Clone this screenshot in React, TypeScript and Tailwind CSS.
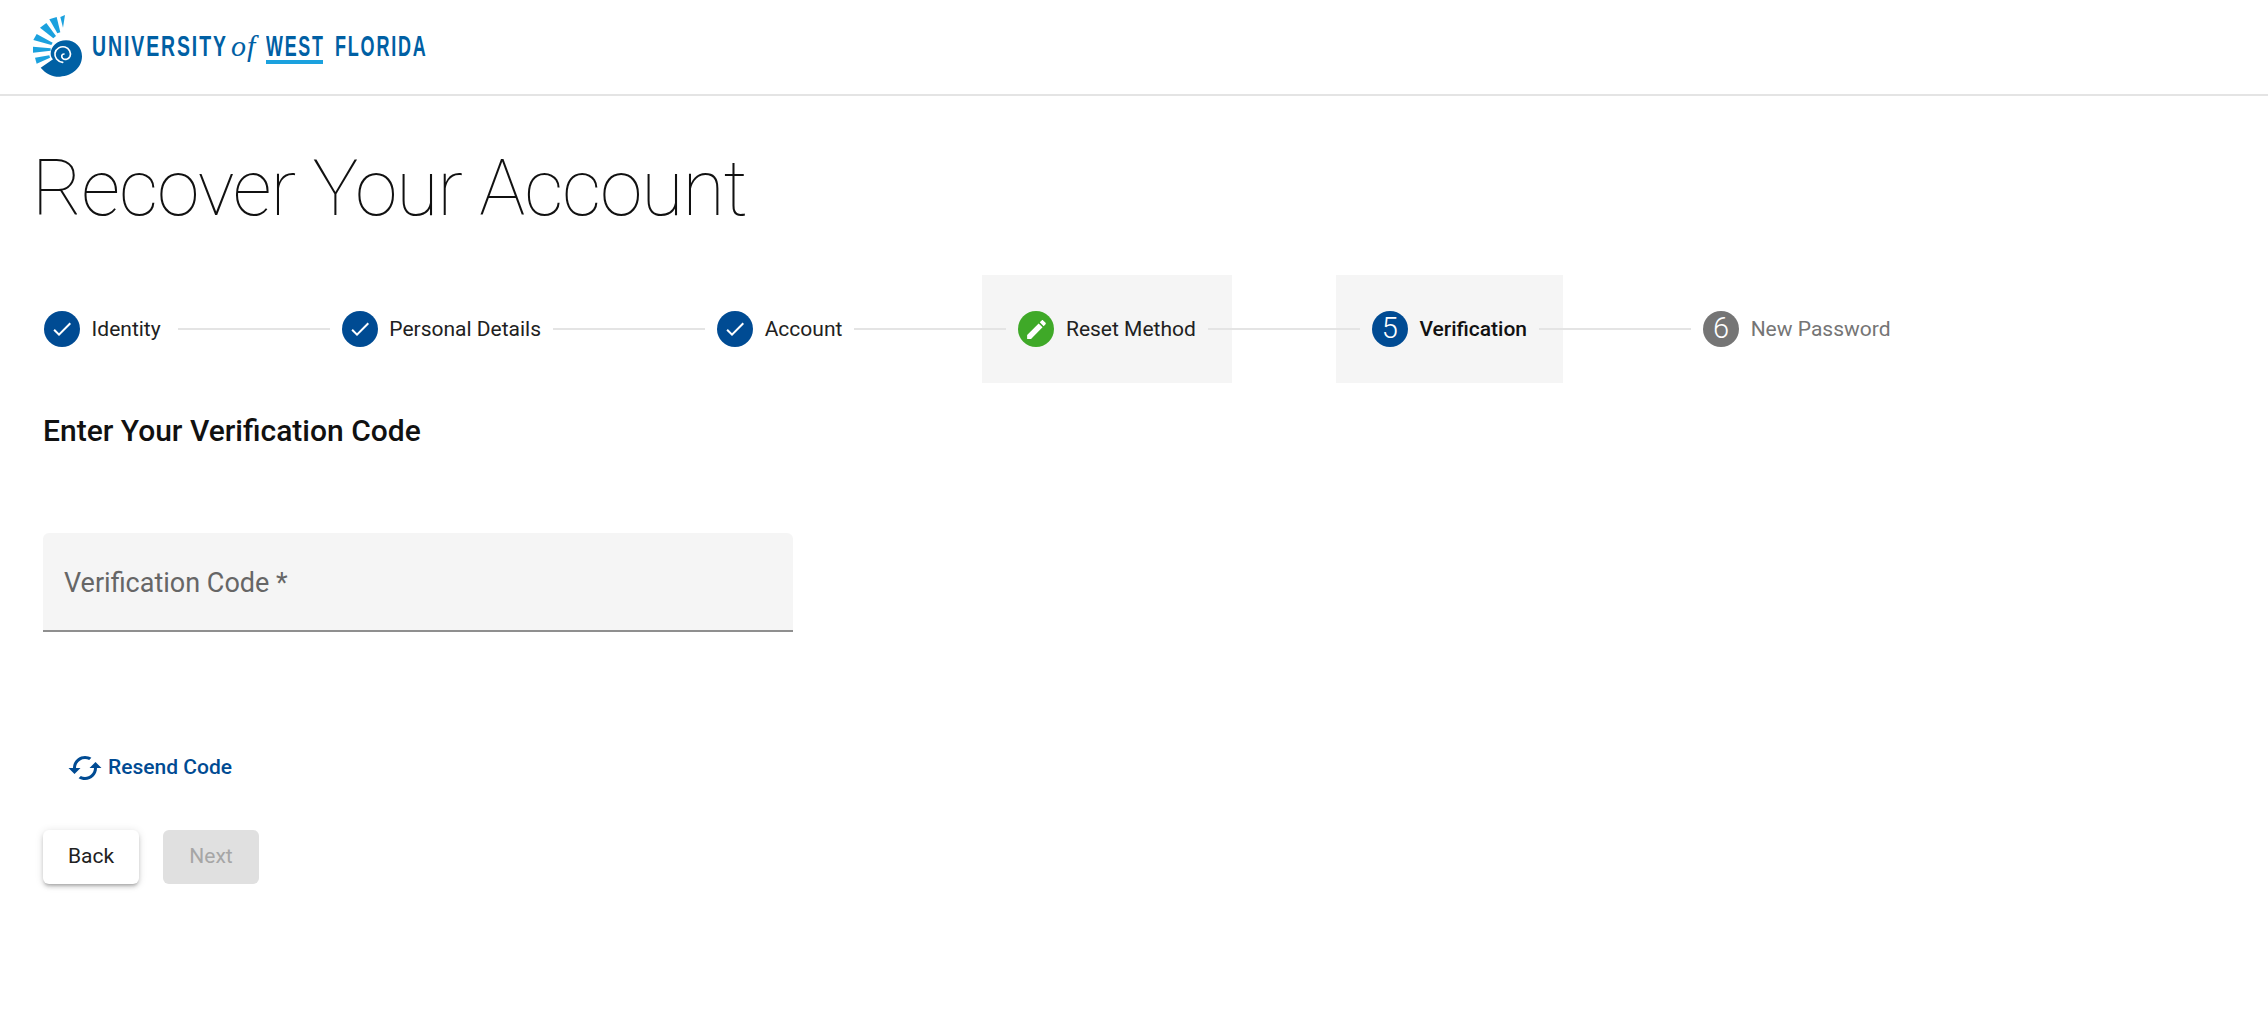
type StepState = 'done' | 'edit' | 'current' | 'todo'

const STEPS: { label: string; state: StepState; num?: number; active?: boolean }[] = [
  { label: 'Identity', state: 'done' },
  { label: 'Personal Details', state: 'done' },
  { label: 'Account', state: 'done' },
  { label: 'Reset Method', state: 'edit', active: true },
  { label: 'Verification', state: 'current', num: 5, active: true },
  { label: 'New Password', state: 'todo', num: 6 },
]

function Logo() {
  return (
    <div className="flex items-center">
      <svg width="49" height="62" viewBox="99 50 147 186" className="shrink-0">
        <g fill="#1ba1de">
          <path d="M181 56 195 50 189 88Z" />
          <path d="M148 63 170 56 181 102 172 105Z" />
          <path d="M120 88 139 74 168 113 160 120Z" />
          <path d="M100 125 110 107 158 133 154 140Z" />
          <path d="M99 145 99 163 152 157 152 150Z" />
          <path d="M105 178 110 196 150 178 148 171Z" />
        </g>
        <path
          d="M122 208C138 227 158 236 180 235C218 233 246 207 246 174C246 147 226 126 198 126C172 126 152 145 152 166C152 174 155 179 159 183Z"
          fill="#0060a4"
        />
        <path
          d="M188 192C172 190 163 177 165 164C168 150 182 143 195 146C208 150 214 163 210 174C206 183 195 186 188 180C183 175 185 167 192 167"
          fill="none"
          stroke="#fff"
          strokeWidth="5"
          strokeLinecap="round"
        />
      </svg>
      <div className="ml-[10px] flex h-[30px] items-baseline text-[30px] leading-none font-bold whitespace-nowrap text-[#0060a4] [font-family:'Liberation_Sans',sans-serif]">
        <span className="w-[130px]">
          <span className="inline-block origin-left scale-x-[0.647] tracking-[3px]">UNIVERSITY</span>
        </span>
        <span className="ml-[9px] w-[26px] text-[30px] font-normal tracking-[1px] italic [font-family:'Liberation_Serif',serif]">of</span>
        <span className="relative ml-[9px] w-[57px]">
          <span className="inline-block origin-left scale-x-[0.595] tracking-[3px]">WEST</span>
          <span className="absolute left-0 right-0 top-[29px] h-[4px] bg-[#1ba1de]" />
        </span>
        <span className="ml-[12px] w-[91px]">
          <span className="inline-block origin-left scale-x-[0.6] tracking-[3px]">FLORIDA</span>
        </span>
      </div>
    </div>
  )
}

function StepIcon({ state, num }: { state: StepState; num?: number }) {
  const bg = state === 'edit' ? 'bg-[#3fa928]' : state === 'todo' ? 'bg-[#757575]' : 'bg-[#004b93]'
  return (
    <div className={`flex h-[36px] w-[36px] shrink-0 items-center justify-center rounded-full text-[29px] font-light text-white ${bg}`}>
      {state === 'done' && (
        <svg width="24" height="24" viewBox="0 0 24 24" fill="#fff">
          <path d="M9 16.17L4.83 12l-1.42 1.41L9 19 21 7l-1.41-1.41z" />
        </svg>
      )}
      {state === 'edit' && (
        <svg width="25" height="25" viewBox="0 0 24 24" fill="#fff">
          <path d="M3 17.25V21h3.75L17.81 9.94l-3.75-3.75L3 17.25zM20.71 7.04c.39-.39.39-1.02 0-1.41l-2.34-2.34c-.39-.39-1.02-.39-1.41 0l-1.83 1.83 3.75 3.75 1.83-1.83z" />
        </svg>
      )}
      {num}
    </div>
  )
}

export default function App() {
  return (
    <div className="min-h-[1009px] bg-white text-[#212121] [font-family:Roboto,'Liberation_Sans',sans-serif]">
      <header className="flex h-[96px] items-center border-b-2 border-[#e4e4e4] pb-[2px] pl-[33px]">
        <Logo />
      </header>

      <h1 className="mt-[43px] pl-[32px] text-[77px] leading-[100px] font-thin tracking-[-1.1px] text-[#111]">Recover Your Account</h1>

      <div className="mt-[36px] flex h-[108px] items-stretch pl-[8px]">
        {STEPS.map((step, i) => (
          <div key={step.label} className="contents">
            {i > 0 && <div className="relative z-10 -mx-[24px] h-[2px] w-[152px] shrink-0 self-center bg-[#e4e4e4]" />}
            <div className={`flex items-center gap-[11.6px] px-[36px] ${step.active ? 'bg-[#f5f5f5]' : ''} ${i === 0 ? 'pr-[41px]' : ''}`}>
              <StepIcon state={step.state} num={step.num} />
              <span
                className={`pt-[2px] text-[21px] whitespace-nowrap ${
                  step.state === 'current' ? 'font-medium text-[#111]' : step.state === 'todo' ? 'text-[#757575]' : 'text-[#212121]'
                }`}
              >
                {step.label}
              </span>
            </div>
          </div>
        ))}
      </div>

      <div className="pl-[43px]">
        <h2 className="mt-[28px] text-[30px] leading-[40px] font-medium text-[#111]">Enter Your Verification Code</h2>

        <div className="mt-[82px] flex h-[99px] w-[750px] items-center rounded-t-[6px] border-b-2 border-[#8f8f8f] bg-[#f5f5f5] px-[21px] pt-[4px] text-[27px] text-[#666]">
          Verification Code *
        </div>

        <button className="mt-[118px] flex items-center pl-[24px] text-[21px] font-medium text-[#004b93]">
          <svg width="36" height="36" viewBox="0 0 24 24" fill="#004b93" className="mr-[5px] rotate-90">
            <path d="M12 4V1L8 5l4 4V6c3.31 0 6 2.69 6 6 0 1.01-.25 1.97-.7 2.8l1.46 1.46C19.54 15.03 20 13.57 20 12c0-4.42-3.58-8-8-8zm0 14c-3.31 0-6-2.69-6-6 0-1.01.25-1.97.7-2.8L5.24 7.74C4.46 8.97 4 10.43 4 12c0 4.42 3.58 8 8 8v3l4-4-4-4v3z" />
          </svg>
          Resend Code
        </button>

        <div className="mt-[44px] flex gap-[24px]">
          <button className="h-[54px] w-[96px] rounded-[6px] bg-white text-[21px] font-[450] text-[#212121] shadow-[0_3px_3px_-2px_rgba(0,0,0,0.2),0_3px_4px_0_rgba(0,0,0,0.14),0_1px_8px_0_rgba(0,0,0,0.12)]">
            Back
          </button>
          <button disabled className="h-[54px] w-[96px] rounded-[6px] bg-[#e0e0e0] text-[21px] font-[450] text-[#a6a6a6]">
            Next
          </button>
        </div>
      </div>
    </div>
  )
}
